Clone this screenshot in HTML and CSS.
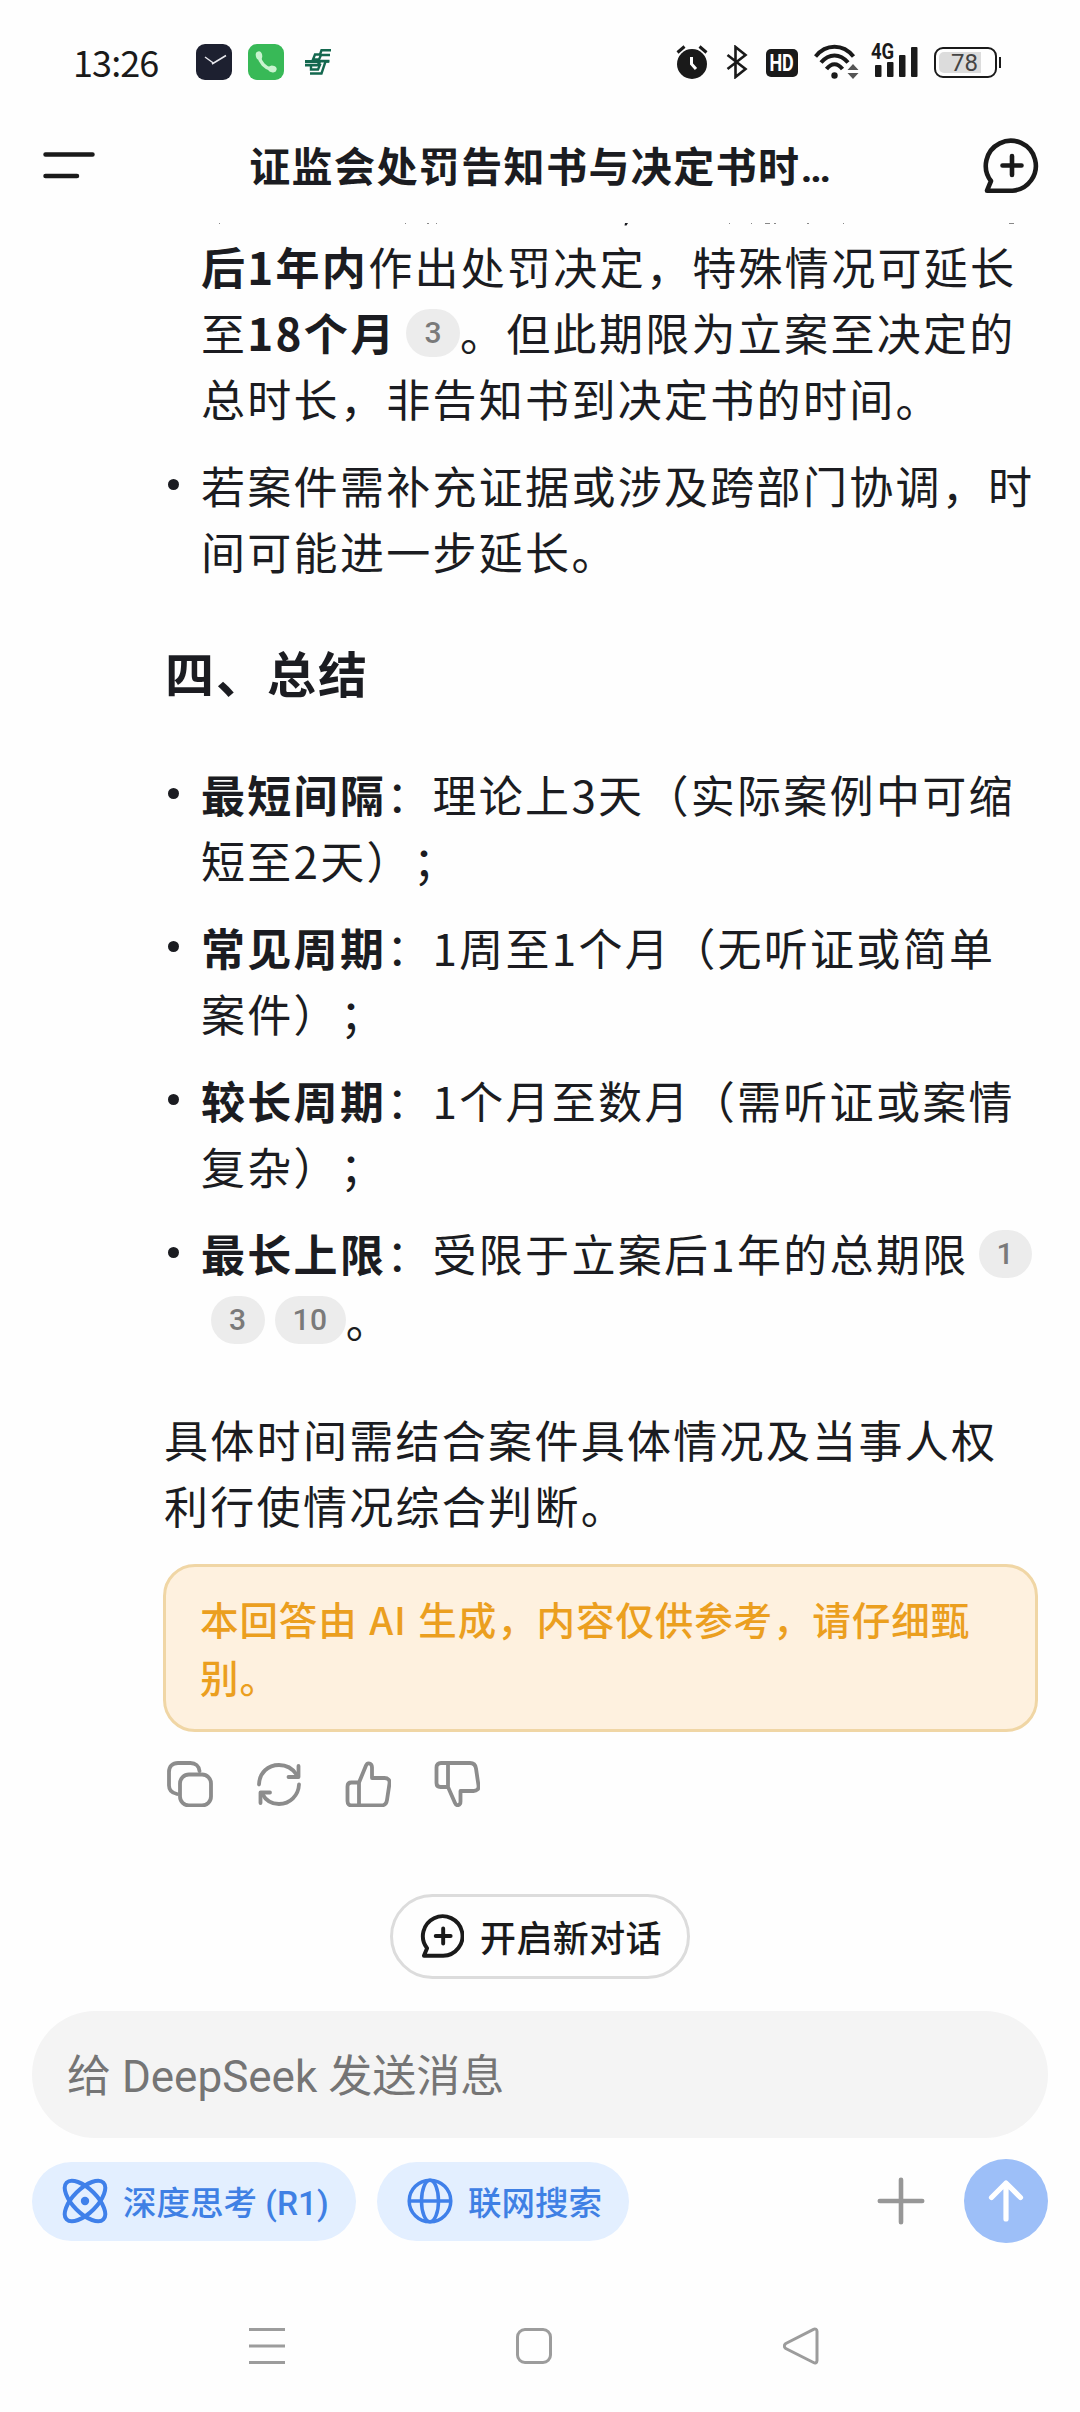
FILE: index.html
```html
<!DOCTYPE html>
<html lang="zh-CN">

<head>
    <meta charset="UTF-8">
    <meta name="viewport" content="width=device-width, initial-scale=1.0">
    <title>DeepSeek</title>
    <link rel="stylesheet" href="styles.css">
</head>

<body>
    <div class="status">
        <span class="time">13:26</span>
        <svg class="app-clock" width="36" height="36" viewBox="0 0 36 36">
            <rect width="36" height="36" rx="9" fill="#1d2030" />
            <path d="M9 13l9 6.500M16 20l14-8.500" stroke="#e8e8ee" stroke-width="1.500" fill="none" />
        </svg>
        <svg class="app-phone" width="36" height="36" viewBox="0 0 36 36">
            <rect width="36" height="36" rx="9" fill="#38b957" />
            <path d="M11 12C12 18.500 17 24 23.500 25.500" stroke="#c9f3cf" stroke-width="3.600" fill="none" />
            <ellipse cx="11" cy="11.500" rx="3.200" ry="4.200" fill="#c9f3cf" transform="rotate(-12 11 11.500)" />
            <ellipse cx="24.500" cy="25" rx="4.200" ry="3.400" fill="#c9f3cf" transform="rotate(12 24.500 25)" />
        </svg>
        <svg class="app-stripe" width="27" height="26" viewBox="0 0 27 26" fill="none" stroke="#14684f" stroke-width="2.400">
            <path d="M26 1.300H16.500L15 5.500H10L8 10.500h6l2-4.500h9" />
            <path d="M0 12.500h13.500M0 16.200h13l2-4h9.500M14 12.500l1-1.500" stroke-width="2.800" />
            <path d="M24 12.500h-3.500L16.500 24.500H5M6 16v4.500h7l2.500-6" />
        </svg>

        <div class="status-right">
            <svg width="32" height="36" viewBox="0 0 32 36">
                <circle cx="16" cy="20" r="15" fill="#1a1a1a" />
                <path d="M1.500 8.500L8.500 2.500M23.500 2.500l7 6" stroke="#1a1a1a" stroke-width="3" />
                <path d="M15.500 13v7l4.500 5" stroke="#fff" stroke-width="3" fill="none" />
            </svg>
            <svg class="bt" width="22" height="34" viewBox="0 0 22 34">
                <path d="M1.500 10l18 14L9.500 32V2l10 8-18 14" fill="none" stroke="#1a1a1a" stroke-width="2.600" />
            </svg>
            <span class="hd"><span class="narrow">HD</span></span>
            <svg class="wifi" width="45" height="36" viewBox="0 0 45 36">
                <g fill="none" stroke="#1a1a1a" stroke-width="4">
                    <path d="M1.500 12.500C12-.500 29-.500 39.500 12.500" />
                    <path d="M7 18.500C15 9 26 9 34 18.500" />
                    <path d="M12.500 25C17.500 18.500 23.500 18.500 28.500 25" />
                </g>
                <circle cx="20.500" cy="31.500" r="3.200" fill="#1a1a1a" />
                <path d="M33.500 26h11l-5.500-6zM33.500 29h11l-5.500 6z" fill="#555" />
            </svg>
            <div class="signal">
                <span class="net">4G</span>
                <svg width="43" height="30" viewBox="0 0 43 30" fill="#1a1a1a">
                    <rect x="0" y="18" width="6.500" height="12" rx="1" />
                    <rect x="12" y="15" width="6.500" height="15" rx="1" />
                    <rect x="24" y="8" width="6.500" height="22" rx="1" />
                    <rect x="36" y="0" width="6.500" height="30" rx="1" />
                </svg>
            </div>
            <div class="battery"><span class="level">78</span></div>
            <span class="battery-tip"></span>
        </div>
    </div>

    <header class="header">
        <svg width="52" height="28" viewBox="0 0 52 28" stroke="#1a1a1a" stroke-width="4.500" stroke-linecap="round">
            <path d="M2.500 2.500h47M2.500 24h31.500" />
        </svg>
        <h1 class="title">证监会处罚告知书与决定书时<span class="dots">…</span></h1>
        <svg width="56" height="56" viewBox="0 0 56 56" fill="none" stroke="#1a1a1a" stroke-width="4.600" stroke-linecap="round" stroke-linejoin="round">
            <path d="M29.500 52.700H4L8 43A25 25 0 1 1 29.500 52.700z" />
            <path d="M29 18v19M19.500 27.500h19" />
        </svg>
    </header>

    <main class="chat">
        <!-- bottoms of the line scrolled under the header -->
        <svg class="cut-line" width="875" height="3" viewBox="0 0 875 3" fill="#888">
            <path d="M56 0h1v1h-1zM242 0h1v1h-1zM264 0h2v1h-2zM273 0h1v1h-1zM566 0h1v1h-1zM588 0h1v1h-1zM602 0h5v1h-5zM611 0h2v1h-2zM644 0h2v1h-2zM680 0h1v1h-1zM846 0h5v1h-5z" />
            <path d="M462 0h3l-1.500 2.500h-2z" fill="#1b1c21" />
        </svg>

        <ul class="list">
            <li class="no-dot"><b>后1年内</b>作出处罚决定，特殊情况可延长<br>至<b>18个月</b><span class="ref">3</span>。但此期限为立案至决定的<br>总时长，非告知书到决定书的时间。</li>
            <li>若案件需补充证据或涉及跨部门协调，时<br>间可能进一步延长。</li>
        </ul>

        <h2 class="heading">四、总结</h2>

        <ul class="list">
            <li><b>最短间隔</b>：理论上3天（实际案例中可缩<br>短至2天）；</li>
            <li><b>常见周期</b>：1周至1个月（无听证或简单<br>案件）；</li>
            <li><b>较长周期</b>：1个月至数月（需听证或案情<br>复杂）；</li>
            <li><b>最长上限</b>：受限于立案后1年的总期限<span class="ref">1</span><br><span class="ref">3</span><span class="ref">10</span>。</li>
        </ul>

        <p class="text">具体时间需结合案件具体情况及当事人权<br>利行使情况综合判断。</p>

        <div class="notice">本回答由 AI 生成，内容仅供参考，请仔细甄<br>别。</div>

        <div class="actions">
            <svg width="46" height="46" viewBox="0 0 46 46">
                <rect x="13" y="13.500" width="31" height="31" rx="9" />
                <path d="M10 33C5 32 2 29 2 24.500V11C2 5.500 5.500 2 11 2h12.500c5 0 8.500 3 9 8" />
            </svg>
            <svg width="46" height="46" viewBox="0 0 46 46">
                <path d="M3 23.500C3.500 11.500 12 4 23 4c8 0 13.500 3.500 17.500 9.500" />
                <path d="M42.500 5v11h-10" />
                <path d="M43 23.500C42.500 34.500 34 43 23 43 15 43 9.500 39 6 32.500" />
                <path d="M4.500 42V31.500H14" />
            </svg>
            <svg width="46" height="46" viewBox="0 0 46 46">
                <path d="M14 21.500L21 4.500C22.500 1 27 2 27 6.500V17H39.500c3.500 0 5.500 2 5 5.500L42 39c-.500 3.500-2.500 5.500-6 5.500H7C4 44.500 2.500 43 2.500 40V25.500c0-3 1.500-4 4-4zM14 21.500v23" />
            </svg>
            <svg width="46" height="46" viewBox="0 0 46 46">
                <path d="M14 26L21 42C22.500 45.500 26.500 44.500 26.500 40.500V30H39.500c3.500 0 5.500-2 5-5.500L42 7.500C41.500 4 39.500 2 36 2H7C4 2 2.500 3.500 2.500 6.500v15.500c0 3 1.500 4 4 4zM14 2v24" />
            </svg>
        </div>
    </main>

    <footer class="footer">
        <button class="new-chat">
            <svg width="44" height="44" viewBox="0 0 56 56" fill="none" stroke="#1a1a1a" stroke-width="5" stroke-linecap="round" stroke-linejoin="round">
                <path d="M29.500 53.200H5L9 43.500A25.200 25.200 0 1 1 29.500 53.200z" />
                <path d="M29.500 18.500v19M20 28h19" />
            </svg>
            <span>开启新对话</span>
        </button>

        <div class="input">给 DeepSeek 发送消息</div>

        <div class="tools">
            <button class="chip chip-think">
                <svg width="46" height="46" viewBox="0 0 46 46" fill="none" stroke="#3f80ea" stroke-width="4">
                    <ellipse cx="23" cy="23" rx="26" ry="12" transform="rotate(45 23 23)" />
                    <ellipse cx="23" cy="23" rx="26" ry="12" transform="rotate(-45 23 23)" />
                    <circle cx="23" cy="23" r="4.200" fill="#3f80ea" stroke="none" />
                </svg>
                <span class="label">深度思考 (R1)</span>
            </button>
            <button class="chip chip-web">
                <svg width="46" height="46" viewBox="0 0 46 46" fill="none" stroke="#3f80ea" stroke-width="3.500">
                    <circle cx="23" cy="23" r="20.800" />
                    <ellipse cx="23" cy="23" rx="8.500" ry="20.800" />
                    <path d="M2 23h42" />
                </svg>
                <span class="label">联网搜索</span>
            </button>
            <svg class="plus" width="48" height="48" viewBox="0 0 48 48" stroke="#979797" stroke-width="4.600" stroke-linecap="round">
                <path d="M24 2.800v42.400M2.800 24h42.400" />
            </svg>
            <div class="send">
                <svg width="40" height="46" viewBox="0 0 40 46" fill="none" stroke="#fff" stroke-width="5.200" stroke-linecap="round" stroke-linejoin="round">
                    <path d="M20 5v36M5.500 19.500L20 5l14.500 14.500" />
                </svg>
            </div>
        </div>
    </footer>

    <nav class="navbar">
        <svg width="36" height="38" viewBox="0 0 36 38">
            <path d="M0 2.500h36M0 19h36M0 35.500h36" />
        </svg>
        <svg width="36" height="38" viewBox="0 0 36 38">
            <rect x="1.500" y="2.500" width="33" height="33" rx="7.500" />
        </svg>
        <svg width="36" height="38" viewBox="0 0 36 38">
            <path d="M2.800 16.500L30.500 2.300C32.500 1.500 34 2.500 34 4.500v29c0 2-1.500 3-3.500 2L2.800 21.500C.800 20 .800 18 2.800 16.500z" />
        </svg>
    </nav>
</body>

</html>
```
FILE: styles.css
```css
* {
    box-sizing: border-box;
    margin: 0;
    padding: 0;
}

body {
    width: 1080px;
    height: 2412px;
    overflow: hidden;
    display: flex;
    flex-direction: column;
    background: #fefefe;
    color: #1b1c21;
    font-family: "Noto Sans CJK SC", sans-serif;
    text-spacing-trim: space-all;
    white-space: nowrap;
}

svg {
    display: block;
    flex: none;
}

button {
    border: none;
    font-family: inherit;
    color: inherit;
}

/* status bar */
.status {
    height: 124px;
    padding: 0 79px 0 73px;
    display: flex;
    align-items: center;
    color: #1a1a1a;
}

.time {
    width: 123px;
    padding-bottom: 3px;
    font-size: 36px;
    letter-spacing: -0.9px;
    line-height: 40px;
}

.app-phone {
    margin-left: 16px;
}

.app-stripe {
    margin-left: 21px;
}

.status-right {
    margin-left: auto;
    display: flex;
    align-items: center;
}

.bt {
    margin-left: 18px;
}

.hd {
    width: 32px;
    height: 28px;
    margin: 2px 0 0 18px;
    display: flex;
    justify-content: center;
    border-radius: 5px;
    background: #1a1a1a;
    color: #fff;
    font: bold 23px/29px Roboto, sans-serif;
}

.narrow {
    transform: scaleX(0.78);
}

.wifi {
    margin-left: 16px;
}

.signal {
    position: relative;
    margin-left: 16px;
}

.net {
    position: absolute;
    left: -4px;
    top: -6px;
    font: bold 22px/22px Roboto, sans-serif;
    transform: scaleX(0.84);
    transform-origin: left;
}

.battery {
    width: 63px;
    height: 31px;
    margin-left: 16px;
    padding: 3px;
    border: 2px solid #1a1a1a;
    border-radius: 9px;
}

.level {
    display: block;
    width: 42px;
    height: 21px;
    padding-left: 12px;
    border-radius: 5px 0 0 5px;
    background: #dcdcdc;
    color: #444;
    font: 24px/22px Roboto, sans-serif;
}

.battery-tip {
    width: 2px;
    height: 11px;
    margin-left: 2px;
    background: #1a1a1a;
}

/* header */
.header {
    height: 84px;
    padding: 0 41px 0 43px;
    display: flex;
    align-items: center;
    justify-content: space-between;
}

.title {
    width: 736px;
    font-size: 41px;
    font-weight: 700;
    letter-spacing: 1.4px;
    line-height: 60px;
    padding-left: 2px;
    text-align: center;
}

.dots {
    font-family: Roboto, sans-serif;
    letter-spacing: 0;
}

/* conversation */
.chat {
    height: 1686px;
    padding: 15px 42px 0 163px;
}

.cut-line {
    margin-bottom: 7px;
}

.list {
    list-style: none;
    font-size: 44px;
    letter-spacing: 2.3px;
    line-height: 66px;
}

.list li {
    position: relative;
    padding-left: 38px;
    margin-bottom: 21px;
}

.list li::before {
    content: "";
    position: absolute;
    left: 5px;
    top: 27px;
    width: 11px;
    height: 11px;
    border-radius: 50%;
    background: #1b1c21;
}

.list .no-dot::before {
    display: none;
}

.ref {
    display: inline-block;
    height: 48px;
    margin: 10px 0 0 10px;
    padding: 0 18px;
    border-radius: 24px;
    background: #ececec;
    color: #7a7a7a;
    font: 500 30px/48px Roboto, sans-serif;
    letter-spacing: 0.5px;
    vertical-align: top;
}

.heading {
    margin: 51px 0 52px;
    font-size: 49px;
    letter-spacing: 2px;
    line-height: 74px;
    padding-left: 2px;
}

.text {
    margin-top: 54px;
    padding-left: 1px;
    font-size: 44px;
    letter-spacing: 2.3px;
    line-height: 66px;
}

.notice {
    height: 168px;
    margin-top: 26px;
    padding: 22px 34px;
    border: 3px solid #f0d6a5;
    border-radius: 32px;
    background: #fef1df;
    color: #eb9f1f;
    font-size: 38.5px;
    font-weight: 500;
    letter-spacing: 0.9px;
    word-spacing: 2px;
    line-height: 58px;
}

.actions {
    display: flex;
    gap: 43px;
    margin: 29px 0 0 4px;
    fill: none;
    stroke: #8c8c8c;
    stroke-width: 3.8px;
    stroke-linecap: round;
    stroke-linejoin: round;
}

/* bottom area */
.footer {
    padding: 0 32px;
}

.new-chat {
    width: 300px;
    height: 85px;
    margin: 0 auto 32px;
    display: flex;
    align-items: center;
    padding: 0 0 2px 27px;
    gap: 16px;
    border: 3px solid #dcdcdc;
    border-radius: 43px;
    background: #fefefe;
    color: #1a1a1a;
    font-size: 36px;
    font-weight: 500;
    letter-spacing: 0.4px;
    line-height: 50px;
}

.input {
    height: 127px;
    padding-left: 35px;
    border-radius: 64px;
    background: #f4f4f4;
    color: #757575;
    font-family: Roboto, "Noto Sans CJK SC", sans-serif;
    font-size: 44px;
    line-height: 132px;
}

.tools {
    height: 84px;
    margin-top: 21px;
    display: flex;
    align-items: center;
}

.chip {
    height: 79px;
    display: flex;
    align-items: center;
    border-radius: 40px;
    background: #e3efff;
    color: #3f80e4;
    font-family: Roboto, "Noto Sans CJK SC", sans-serif;
    font-size: 33.5px;
    font-weight: 500;
    line-height: 48px;
}

.label {
    padding-top: 5px;
}

.chip-think {
    width: 324px;
    padding-left: 30px;
    gap: 15px;
}

.chip-web {
    width: 252px;
    margin-left: 21px;
    padding-left: 30px;
    gap: 15px;
}

.plus {
    margin-left: auto;
}

.send {
    width: 84px;
    height: 84px;
    margin-left: 39px;
    display: flex;
    align-items: center;
    justify-content: center;
    border-radius: 50%;
    background: #9dbff8;
}

/* system navigation */
.navbar {
    margin-top: auto;
    height: 169px;
    padding: 84px 261px 0 249px;
    display: flex;
    justify-content: space-between;
    fill: none;
    stroke: #9c9c9c;
    stroke-width: 3px;
}
```
